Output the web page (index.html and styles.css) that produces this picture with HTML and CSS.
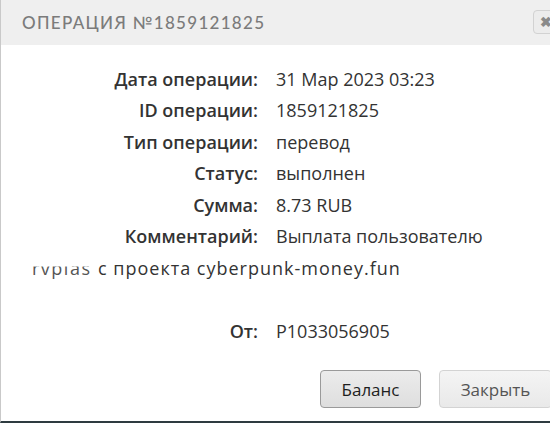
FILE: index.html
```html
<!DOCTYPE html>
<html lang="ru">
<head>
<meta charset="utf-8">
<title>Операция №1859121825</title>
<link rel="stylesheet" href="styles.css">
</head>
<body>
<div class="dialog">
  <div class="header">
    <div class="title">Операция №1859121825</div>
    <div class="close">&#x2716;</div>
  </div>
  <div class="details">
    <div class="label">Дата операции:</div><div class="value">31 Мар 2023 03:23</div>
    <div class="label">ID операции:</div><div class="value">1859121825</div>
    <div class="label">Тип операции:</div><div class="value">перевод</div>
    <div class="label">Статус:</div><div class="value">выполнен</div>
    <div class="label">Сумма:</div><div class="value">8.73 RUB</div>
    <div class="label">Комментарий:</div><div class="value">Выплата пользователю</div>
    <div class="wrapline"><span class="hidden-name">rvplas</span><span class="rest">с проекта cyberpunk-money.fun</span></div>
    <div class="spacer"></div>
    <div class="label">От:</div><div class="value">P1033056905</div>
  </div>
  <div class="buttons">
    <button class="btn btn-primary">Баланс</button>
    <button class="btn btn-light">Закрыть</button>
  </div>
</div>
</body>
</html>
```
FILE: styles.css
```css
html, body {
  margin: 0;
  padding: 0;
  background: #ffffff;
  overflow: hidden;
}
body {
  width: 550px;
  height: 423px;
  font-family: "Open Sans", "Liberation Sans", sans-serif;
}
.dialog {
  box-sizing: border-box;
  height: 423px;
  border-left: 1px solid #c9c9c9;
  border-bottom: 2px solid #2e3b40;
  display: flex;
  flex-direction: column;
}
.header {
  height: 45px;
  background: #efefef;
  display: flex;
  align-items: center;
  padding-left: 21px;
  position: relative;
}
.title {
  font-family: "Lato", "Open Sans", sans-serif;
  font-size: 17px;
  letter-spacing: 1.3px;
  text-transform: uppercase;
  color: #7b7b7b;
  font-weight: 500;
}
.close {
  position: absolute;
  left: 532px;
  top: 10px;
  width: 28px;
  height: 24px;
  box-sizing: border-box;
  border: 1px solid #d2d2d2;
  border-radius: 4px;
  background: #ececec;
  color: #8a8a8a;
  font-size: 14px;
  line-height: 22px;
  padding-left: 6px;
  font-weight: bold;
}
.details {
  display: grid;
  grid-template-columns: 257px 1fr;
  column-gap: 18px;
  grid-auto-rows: 31.5px;
  padding-top: 18px;
  font-size: 18px;
  color: #333333;
}
.label, .value {
  display: flex;
  align-items: center;
  white-space: nowrap;
}
.label {
  justify-content: flex-end;
  font-weight: 600;
}
.value {
  font-weight: 400;
}
.wrapline {
  grid-column: 1 / 3;
  display: flex;
  align-items: center;
  padding-left: 31px;
  white-space: pre;
}
.hidden-name {
  color: #555;
  clip-path: inset(45% 0 0 0);
  font-size: 18px;
  letter-spacing: 1.5px;
  width: 66px;
}
.rest {
  letter-spacing: 1px;
}
.spacer {
  grid-column: 1 / 3;
}
.buttons {
  display: flex;
  gap: 18px;
  padding-left: 319px;
  margin-top: auto;
  margin-bottom: 13px;
}
.btn {
  flex: none;
  height: 38px;
  box-sizing: border-box;
  border-radius: 4px;
  font-family: "Open Sans", "DejaVu Sans", sans-serif;
  font-size: 17px;
  padding: 0;
}
.btn-primary {
  width: 101px;
  border: 1px solid #9a9a9a;
  background: linear-gradient(#ececec, #dedede);
  color: #1e1e1e;
}
.btn-light {
  width: 113px;
  border: 1px solid #d3d3d3;
  background: linear-gradient(#f4f4f4, #e9e9e9);
  color: #555555;
}
```
